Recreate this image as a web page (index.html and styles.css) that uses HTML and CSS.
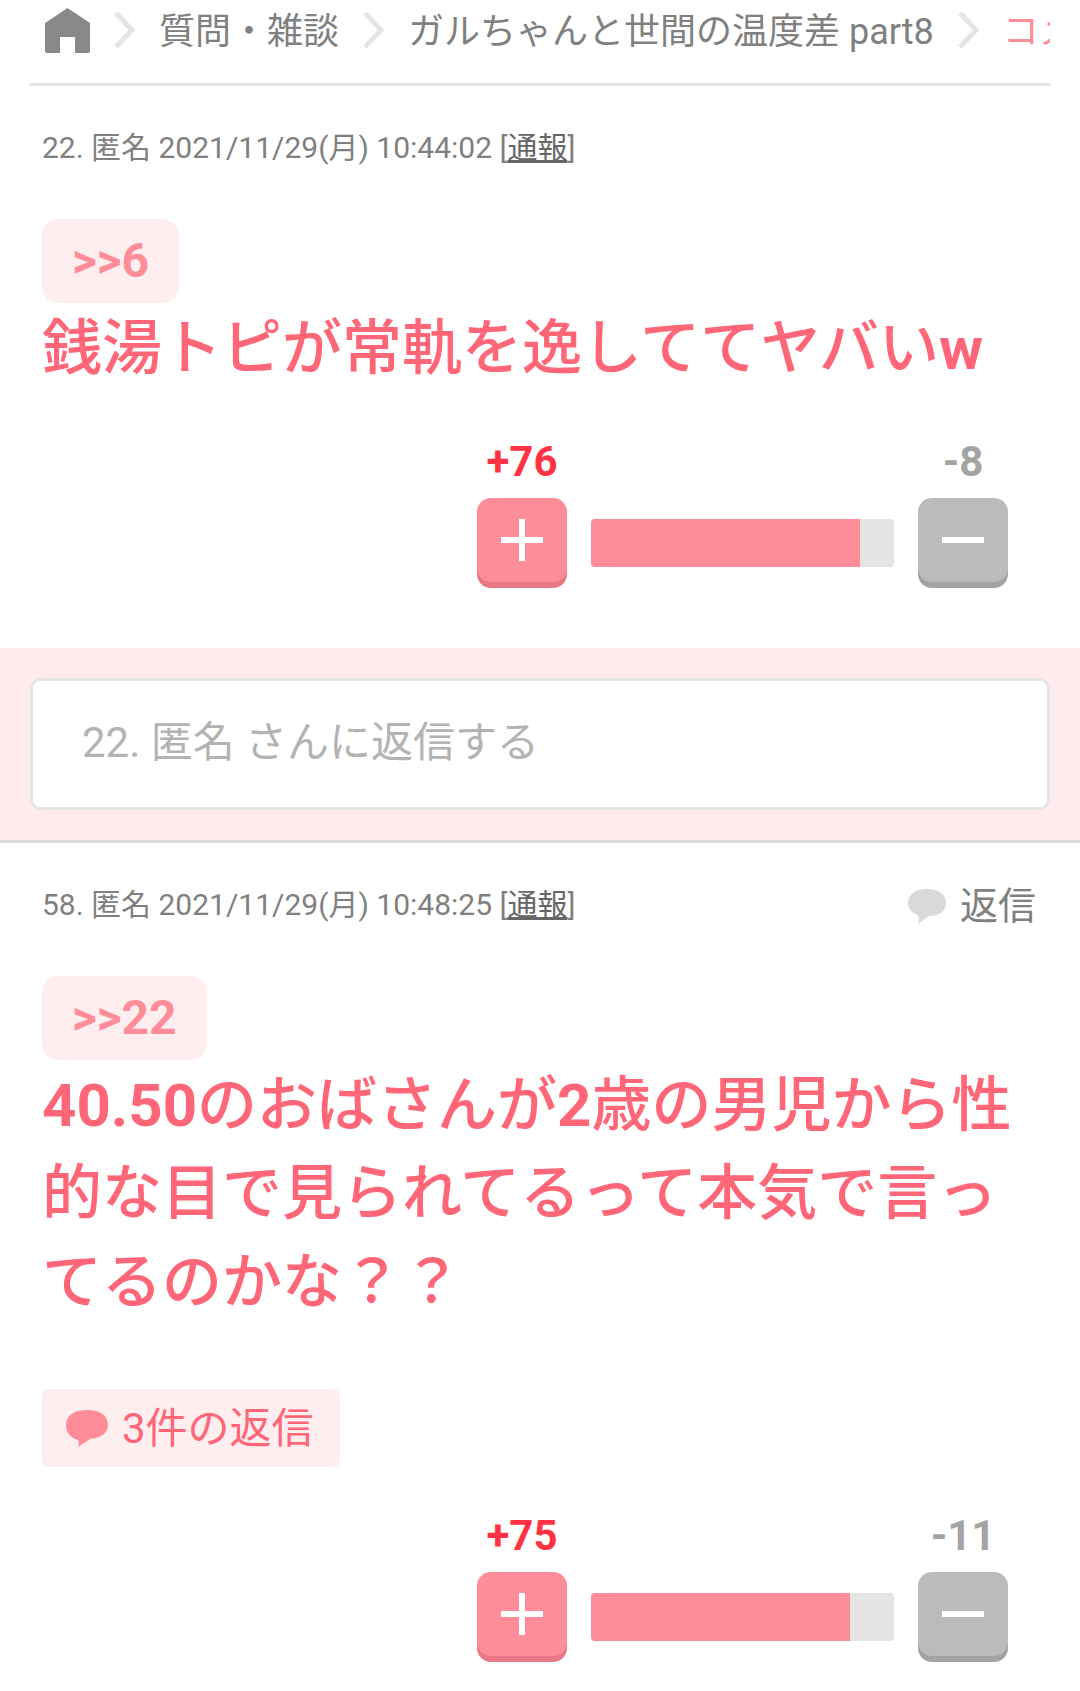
FILE: index.html
```html
<!DOCTYPE html>
<html lang="ja">
<head>
  <meta charset="UTF-8">
  <title>コメント</title>
  <link rel="stylesheet" href="styles.css">
</head>
<body>
  <nav class="breadcrumb">
    <svg class="home-icon" viewBox="0 0 45 45"><path d="M22.5 0L45 15V43a2 2 0 0 1-2 2H30V29H15v16H2a2 2 0 0 1-2-2V15z" fill="#888a88"/></svg>
    <svg class="crumb-arrow" viewBox="0 0 21 36"><polyline points="2,1 18,18 2,35" fill="none" stroke="#e5e5e5" stroke-width="5"/></svg>
    <span class="crumb">質問・雑談</span>
    <svg class="crumb-arrow" viewBox="0 0 21 36"><polyline points="2,1 18,18 2,35" fill="none" stroke="#e5e5e5" stroke-width="5"/></svg>
    <span class="crumb">ガルちゃんと世間の温度差 part8</span>
    <svg class="crumb-arrow" viewBox="0 0 21 36"><polyline points="2,1 18,18 2,35" fill="none" stroke="#e5e5e5" stroke-width="5"/></svg>
    <span class="crumb crumb-current">コメント</span>
  </nav>

  <section class="comment">
    <div class="meta">
      <span class="meta-info">22. 匿名 2021/11/29(月) 10:44:02 [<a class="report">通報</a>]</span>
    </div>
    <div class="anchor">&gt;&gt;6</div>
    <div class="body">
      <p class="line">銭湯トピが常軌を逸しててヤバい<b>w</b></p>
    </div>
    <div class="vote">
      <span class="count plus-count">+76</span>
      <span></span>
      <span class="count minus-count">-8</span>
      <div class="vote-btn plus"><i class="bar-h"></i><i class="bar-v"></i></div>
      <div class="rate"><div class="rate-fill" style="width: 88.8%"></div></div>
      <div class="vote-btn minus"><i class="bar-h"></i></div>
    </div>
  </section>

  <div class="reply-form">
    <div class="reply-input">22. 匿名 さんに返信する</div>
  </div>

  <section class="comment">
    <div class="meta">
      <span class="meta-info">58. 匿名 2021/11/29(月) 10:48:25 [<a class="report">通報</a>]</span>
      <span class="reply-link">
        <svg class="reply-icon" viewBox="0 0 38 35"><path d="M19 0C30 0 38 5 38 14C38 23 30 27 21 27C17 29 14 32 10 35C11 32 11 29 10 26C4 24 0 20 0 14C0 5 8 0 19 0z" fill="#d9d9d9"/></svg>
        <span class="reply-text">返信</span>
      </span>
    </div>
    <div class="anchor">&gt;&gt;22</div>
    <div class="body">
      <p class="line"><b>40.50</b>のおばさんが<b>2</b>歳の男児から性</p>
      <p class="line">的な目で見られてるって本気で言っ</p>
      <p class="line">てるのかな？？</p>
    </div>
    <div class="replies">
      <svg class="replies-icon" viewBox="0 0 42 37"><path d="M21 0C33 0 42 5 42 15C42 24 34 28 24 29C20 32 16 34 12 37C13 34 13 32 12 30C5 28 0 23 0 15C0 5 9 0 21 0z" fill="#ff8c99"/></svg>
      <span class="replies-text">3件の返信</span>
    </div>
    <div class="vote">
      <span class="count plus-count">+75</span>
      <span></span>
      <span class="count minus-count">-11</span>
      <div class="vote-btn plus"><i class="bar-h"></i><i class="bar-v"></i></div>
      <div class="rate"><div class="rate-fill" style="width: 85.5%"></div></div>
      <div class="vote-btn minus"><i class="bar-h"></i></div>
    </div>
  </section>
</body>
</html>
```

FILE: styles.css
```css
:root {
  --pink: #ff6677;
  --pink-mid: #ff8c99;
  --pink-light: #ffeef0;
  --gray-text: #808080;
  --line: #e5e5e5;
}

body {
  margin: 0;
  background-color: #fff;
  font-family: Roboto, "Noto Sans CJK JP", sans-serif;
  color: var(--gray-text);
}

.breadcrumb {
  display: flex;
  align-items: center;
  gap: 24px;
  height: 60px;
  margin: 0 30px;
  padding: 0 0 23px 15px;
  border-bottom: 3px solid var(--line);
  overflow: hidden;
  white-space: nowrap;
  font-size: 36px;
}

.home-icon {
  flex: none;
  width: 45px;
  height: 45px;
}

.crumb-arrow {
  flex: none;
  width: 21px;
  height: 36px;
}

.crumb {
  flex: none;
  padding-bottom: 4px;
}

.crumb-current {
  color: var(--pink-mid);
}

.comment {
  padding: 41px 42px 66px;
}

.meta {
  display: flex;
  justify-content: space-between;
  align-items: center;
  height: 40px;
  font-size: 30px;
  white-space: nowrap;
}

.meta-info {
  padding-bottom: 4px;
}

.report {
  color: #666;
  text-decoration: underline;
}

.reply-link {
  display: flex;
  align-items: center;
  gap: 14px;
  margin-right: 2px;
  font-size: 38px;
}

.reply-icon {
  width: 38px;
  height: 35px;
  margin-top: 4px;
}

.reply-text {
  padding-bottom: 4px;
}

.anchor {
  display: table;
  margin-top: 52px;
  padding: 0 30px;
  height: 84px;
  line-height: 84px;
  background-color: var(--pink-light);
  border-radius: 16px;
  color: var(--pink-mid);
  font-size: 48px;
  font-weight: 700;
}

.body {
  padding-top: 1.5px;
  color: var(--pink);
  font-size: 60px;
  font-weight: 500;
  line-height: 88.5px;
  white-space: nowrap;
}

.line {
  margin: 0;
}

.line b {
  font-weight: 700;
}

.replies {
  display: flex;
  align-items: center;
  gap: 14px;
  width: fit-content;
  height: 78px;
  margin-top: 62px;
  padding: 0 26px 0 24px;
  background-color: var(--pink-light);
  border-radius: 6px;
  color: var(--pink);
  font-size: 42px;
}

.replies-icon {
  width: 42px;
  height: 37px;
}

.replies-text {
  padding-bottom: 8px;
}

.vote {
  display: grid;
  grid-template-columns: 90px 303px 90px;
  column-gap: 24px;
  row-gap: 13px;
  justify-content: end;
  justify-items: center;
  margin-top: 46px;
  margin-right: 30px;
}

.count {
  font-size: 42px;
  font-weight: 700;
  line-height: 46px;
  white-space: nowrap;
}

.plus-count {
  color: #ff3344;
}

.minus-count {
  color: #a3a3a3;
}

.vote-btn {
  position: relative;
  width: 90px;
  height: 84px;
  border-radius: 14px;
}

.vote-btn.plus {
  background-color: var(--pink-mid);
  box-shadow: 0 6px 0 #e87885;
}

.vote-btn.minus {
  background-color: #bbb;
  box-shadow: 0 6px 0 #a3a3a3;
}

.bar-h, .bar-v {
  position: absolute;
  background-color: #fff;
}

.bar-h {
  left: 24px;
  top: 39px;
  width: 42px;
  height: 6px;
}

.bar-v {
  left: 42px;
  top: 21px;
  width: 6px;
  height: 42px;
}

.rate {
  justify-self: stretch;
  align-self: center;
  height: 48px;
  margin-top: 5px;
  background-color: var(--line);
  border-radius: 4px;
  overflow: hidden;
}

.rate-fill {
  height: 100%;
  background-color: var(--pink-mid);
}

.reply-form {
  padding: 30px;
  background-color: #ffebed;
  border-bottom: 3px solid #d9d9d9;
}

.reply-input {
  height: 126px;
  padding-left: 49px;
  line-height: 124px;
  background-color: #fff;
  border: 3px solid var(--line);
  border-radius: 10px;
  color: #b3b3b3;
  font-size: 42px;
}
```
